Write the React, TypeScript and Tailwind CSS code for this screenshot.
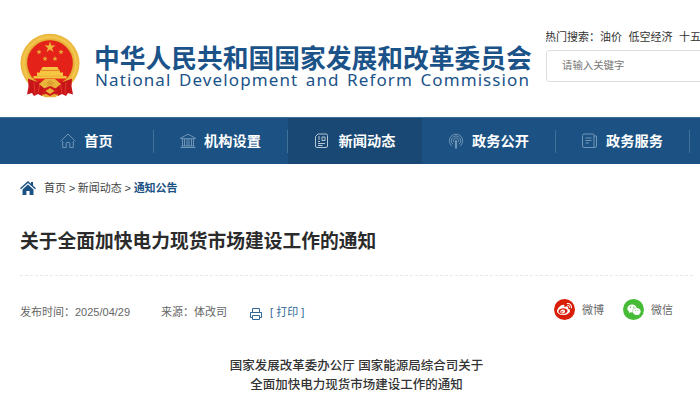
import type { ReactNode } from 'react';
import { FaWeibo, FaWeixin } from 'react-icons/fa';

interface NavItem {
  label: string;
  icon: ReactNode;
  active?: boolean;
}

function Emblem() {
  return (
    <svg viewBox="0 0 60 65" className="w-[60px] h-[65px] flex-shrink-0" aria-hidden="true">
      <defs>
        <radialGradient id="gold" cx="50%" cy="50%" r="50%">
          <stop offset="76%" stopColor="#dda02a" />
          <stop offset="88%" stopColor="#f4c84e" />
          <stop offset="100%" stopColor="#e8b33a" />
        </radialGradient>
      </defs>
      <circle cx="30" cy="30.300" r="29.500" fill="url(#gold)" />
      <circle cx="30" cy="30" r="22.800" fill="#e42219" />
      <path d="M30 8.500l1.300 4h4.200l-3.400 2.500 1.300 4-3.400-2.500-3.400 2.500 1.300-4-3.400-2.500h4.200z" fill="#f0b83c" />
      <path
        d="M19 16.300l.7 1.800 1.900.1-1.500 1.200.5 1.900-1.600-1.100-1.600 1.100.5-1.900-1.500-1.200 1.900-.1zM41 16.300l.7 1.800 1.900.1-1.500 1.200.5 1.900-1.600-1.100-1.600 1.100.5-1.900-1.500-1.200 1.900-.1zM25 23l.7 1.800 1.900.1-1.500 1.200.5 1.900-1.600-1.100-1.600 1.100.5-1.900-1.500-1.200 1.900-.1zM35 23l.7 1.800 1.900.1-1.500 1.200.5 1.900-1.600-1.100-1.600 1.100.5-1.900-1.500-1.200 1.900-.1z"
        fill="#e8a935"
      />
      <path d="M22.500 34h15l1.500 3H21zM20 37.500h20v2h3V43h3.500v2.500h-33V43H17v-3.500h3z" fill="#f6c643" />
      <path d="M20 37.300h20M15 43.200h30" stroke="#dc9626" strokeWidth=".5" />
      {/* Ribbons */}
      <path d="M8 45.500l9 3.500 9-1.500v4l-4 11.500-4-2-4 2-2-3-5 1.500 1.500-8z" fill="#c8151a" />
      <path d="M52 45.500L43 49l-9-1.500v4l4 11.500 4-2 4 2 2-3 5 1.500-1.500-8z" fill="#c8151a" />
      <path d="M14 49.500l1 11M20 50l-2 10M46 49.500l-1 11M40 50l2 10" stroke="#e23a27" strokeWidth="1" />
      <path d="M19 51l6-5h10l6 5-5 4H24z" fill="#eab53b" />
      <path d="M30 47l-5 4 3-.5-2 3.500 4-2 4 2-2-3.500 3 .5z" fill="#dba02f" />
      <path d="M23 56l7-3 7 3 2 7-5-1.500-4 2.500-4-2.500-5 1.500z" fill="#cf1a1b" />
      <path d="M25.500 58l4.500-3 4.500 3-4.500 3zM21 62l5-1 4 2 4-2 5 1-4 2.300H25z" fill="#e9b138" />
    </svg>
  );
}

const svgProps = {
  viewBox: '0 0 16 16',
  fill: 'none',
  stroke: 'currentColor',
  strokeWidth: 1,
  className: 'w-4 h-4',
};

const navItems: NavItem[] = [
  {
    label: '首页',
    icon: (
      <svg {...svgProps}>
        <path d="M.5 8.300L8 1l7.500 7.300M2.700 8v6.500h3.500V10.300q0-.8.800-.8h2q.8 0 .8.800v4.200h3.500V8" strokeLinejoin="round" />
      </svg>
    ),
  },
  {
    label: '机构设置',
    icon: (
      <svg {...svgProps}>
        <path d="M.5 5.200L8 1.200l7.500 4v.5H.5zM.5 14.500h15M1.500 13h13M2.500 6v7M4.500 6v7M7 6v7M9 6v7M11.500 6v7M13.500 6v7" />
      </svg>
    ),
  },
  {
    label: '新闻动态',
    active: true,
    icon: (
      <svg {...svgProps}>
        <path d="M3 1h8q1.500 0 1.500 1.500v10.500q0 1.500-1.500 1.500H2Q.5 14.500.5 13V3.500z" />
        <path d="M7 4h3v3.500H7zM3 4h2M3 6h2M3 8.500h2M3 10.500h7M3 12.500h4.500" />
      </svg>
    ),
  },
  {
    label: '政务公开',
    icon: (
      <svg {...svgProps}>
        <path d="M4 13.200a6.700 6.700 0 1 1 8 0M5 11.300a4.700 4.700 0 1 1 6 0M6 9.300a2.600 2.600 0 1 1 4 0M7.500 7.500v7.800h1V7.500z" />
      </svg>
    ),
  },
  {
    label: '政务服务',
    icon: (
      <svg {...svgProps}>
        <path d="M2 1h9q1 0 1 1v12.500H2q-1.500 0-1.500-1.500V2.500Q.5 1 2 1zM12 3h2.500v10q0 1.500-1.500 1.500h-1M3.500 5h6M3.500 7.500h6M3.500 10H7" />
      </svg>
    ),
  },
];

function Header() {
  return (
    <header className="flex h-[117px] w-full">
      <div className="flex w-[546px] flex-shrink-0 pl-5 pt-[33px]">
        <Emblem />
        <div className="pl-[14px] pt-[13px] text-[#1b5389] whitespace-nowrap">
          <h1 className="text-[25.750px] leading-[26px] font-bold">中华人民共和国国家发展和改革委员会</h1>
          <p className="font-['Noto_Sans'] text-[17px] leading-4 tracking-[1.100px] [word-spacing:2px] ml-px">
            National Development and Reform Commission
          </p>
        </div>
      </div>
      <div className="flex-1 overflow-hidden pt-[29px] whitespace-nowrap text-[11px]">
        <div className="flex gap-[6.500px] leading-4 text-[#333] ml-[-1px]">
          <span>热门搜索：油价</span>
          <span>低空经济</span>
          <span>十五</span>
        </div>
        <div className="mt-[5px] h-8 w-[200px] rounded-[3px] border border-[#dedede] pl-[15px] text-[10.400px] leading-[30px] text-[#777]">
          请输入关键字
        </div>
      </div>
    </header>
  );
}

function Divider() {
  return <span className="h-[23px] w-px flex-shrink-0 bg-[#41709a]" />;
}

function Nav() {
  return (
    <nav className="flex h-[47px] items-center border-t border-[#3c6e9a] bg-[#1b5283] pl-5 overflow-hidden">
      {navItems.map((item) => (
        <div
          key={item.label}
          className={
            item.active
              ? 'flex h-full w-[134px] flex-shrink-0 items-center bg-[#184873]'
              : 'flex h-full w-[134px] flex-shrink-0 items-center'
          }
        >
          <div className="flex flex-1 items-center justify-center text-white">
            <span className={item.active ? 'text-[#b3c6d6]' : 'text-[#7095b5]'}>{item.icon}</span>
            <span className="ml-2 text-[14.200px] font-bold leading-5">{item.label}</span>
          </div>
          {!item.active && <Divider />}
        </div>
      ))}
    </nav>
  );
}

function Breadcrumb() {
  return (
    <div className="flex h-12 items-center pl-5 text-[11px] text-[#444]">
      <svg viewBox="0 0 16 14" className="h-[14px] w-4" fill="#1b5283" aria-hidden="true">
        <path d="M8 0l3 2.800V1h2v3.600L16 7.300l-1 1L8 2 1 8.300l-1-1z" />
        <path d="M8 3.500l5.500 5V14H9.600v-4H6.400v4H2.500V8.500z" />
      </svg>
      <span className="ml-2">首页</span>
      <span className="mx-[2.700px]">&gt;</span>
      <span>新闻动态</span>
      <span className="mx-[2.700px]">&gt;</span>
      <span className="font-bold text-[#1b5283]">通知公告</span>
    </div>
  );
}

function MetaRow() {
  return (
    <div className="flex h-9 items-center text-[11px] text-[#666]">
      <span>发布时间：2025/04/29</span>
      <span className="ml-[31px]">来源：体改司</span>
      <svg viewBox="0 0 12 12" className="ml-[23px] mt-[3px] h-3 w-3" fill="none" stroke="#2f6898" aria-hidden="true">
        <path d="M2.500 4.500v-4h7v4M2.500 9.500H.5v-5h11v5h-2M2.500 7.500h7v4h-7z" />
      </svg>
      <span className="ml-2 text-[#2f6898]">[ 打印 ]</span>
      <div className="ml-auto flex items-center">
        <span className="-mt-[5px] flex h-[21px] w-[21px] items-center justify-center rounded-full bg-[#d81e06] text-white">
          <FaWeibo className="h-[15px] w-[15px]" />
        </span>
        <span className="ml-[7px] -mt-1">微博</span>
        <span className="-mt-[5px] ml-[19px] flex h-[21px] w-[21px] items-center justify-center rounded-full bg-[#46bb36] text-white">
          <FaWeixin className="h-[14px] w-[14px]" />
        </span>
        <span className="ml-[7px] -mt-1">微信</span>
      </div>
    </div>
  );
}

export default function App() {
  return (
    <div className="h-[408px] w-[700px] overflow-hidden bg-white font-['Liberation_Sans','Noto_Sans_CJK_SC',sans-serif]">
      <Header />
      <Nav />
      <Breadcrumb />
      <main className="pl-5 pr-[7px]">
        <h2 className="pt-[15px] text-[18.750px] font-bold leading-[30px] text-[#2b2b2b]">
          关于全面加快电力现货市场建设工作的通知
        </h2>
        <div className="mt-[18px] mb-[18px] border-t border-dashed border-[#e8e8e8]" />
        <div className="pr-[20px]">
          <MetaRow />
        </div>
        <div className="mt-[27px] text-center text-[12.500px] font-medium leading-[18.500px] text-[#333]">
          <p>国家发展改革委办公厅 国家能源局综合司关于</p>
          <p>全面加快电力现货市场建设工作的通知</p>
        </div>
      </main>
    </div>
  );
}
